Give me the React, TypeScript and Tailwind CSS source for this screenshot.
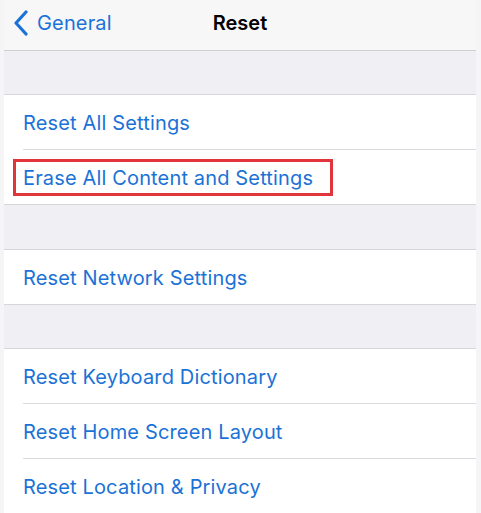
import React from 'react';

const blue = 'text-[#1b72d6]';

const Row: React.FC<{ label: string; last?: boolean; boxed?: boolean }> = ({ label, last, boxed }) => {
  return (
    <div className="bg-white">
      <div className={`h-[54px] flex items-center pl-[19px] pt-[2px] ${blue}`}>
        {boxed ? (
          <div className="-ml-[10px] -mt-[2px] h-[37px] w-[320px] border-[3px] border-[#e2353b] flex items-center pl-[7px] pt-[2px]">
            {label}
          </div>
        ) : (
          <span>{label}</span>
        )}
      </div>
      {!last && <div className="ml-[19px] h-px bg-[#dcdce0]" />}
    </div>
  );
};

const Gap: React.FC<{ h: string }> = ({ h }) => (
  <div className={`${h} bg-[#efeff4] border-y border-[#d6d6da]`} />
);

const App: React.FC = () => {
  const groups = [
    ['Reset All Settings', 'Erase All Content and Settings'],
    ['Reset Network Settings'],
    ['Reset Keyboard Dictionary', 'Reset Home Screen Layout', 'Reset Location & Privacy'],
  ];

  return (
    <div
      className="w-[481px] h-[513px] overflow-hidden bg-[#f5f5f7] px-[4px] pr-[5px]"
      style={{ fontFamily: 'Inter, "Liberation Sans", sans-serif' }}
    >
      <div className="h-full flex flex-col text-[20px] tracking-[0.15px]">
        {/* nav bar */}
        <header className="h-[50px] shrink-0 bg-[#f7f7f8] flex items-center relative pb-[4px]">
          <div className={`flex items-center ${blue} pl-[9px]`}>
            <svg width="17" height="26" viewBox="0 0 17 26" fill="none">
              <path d="M13 2 L3 13 L13 24" stroke="#1b72d6" strokeWidth="3.2" strokeLinecap="round" strokeLinejoin="round" />
            </svg>
            <span className="ml-[7px]">General</span>
          </div>
          <div className="absolute left-0 right-0 text-center font-semibold text-black tracking-normal">Reset</div>
        </header>
        <div className="h-px bg-[#cfcfd3]" />

        <div className="h-[43px] bg-[#efeff4]" />
        <div className="h-px bg-[#d6d6da]" />
        <Row label={groups[0][0]} />
        <Row label={groups[0][1]} boxed last />
        <Gap h="h-[46px]" />
        <Row label={groups[1][0]} last />
        <Gap h="h-[45px]" />
        <Row label={groups[2][0]} />
        <Row label={groups[2][1]} />
        <Row label={groups[2][2]} last />
      </div>
    </div>
  );
};

export default App;
